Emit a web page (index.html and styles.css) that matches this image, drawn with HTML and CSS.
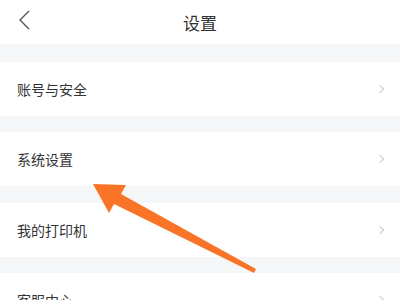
FILE: index.html
```html
<!DOCTYPE html>
<html lang="zh">
<head>
<meta charset="utf-8">
<link rel="stylesheet" href="styles.css">
</head>
<body>
<div class="page">
  <header class="header">
    <svg class="back" width="14" height="22" viewBox="0 0 14 22"><polyline points="12,1 3,10 12,19" fill="none" stroke="#555" stroke-width="1.4"/></svg>
    <h1 class="title">设置</h1>
  </header>
  <div class="gap gap-top"></div>
  <div class="row"><span class="label">账号与安全</span><span class="chev"></span></div>
  <div class="gap"></div>
  <div class="row"><span class="label">系统设置</span><span class="chev"></span></div>
  <div class="gap gap-b"></div>
  <div class="row"><span class="label">我的打印机</span><span class="chev"></span></div>
  <div class="gap"></div>
  <div class="row"><span class="label">客服中心</span><span class="chev"></span></div>
  <svg class="arrow" width="400" height="300" viewBox="0 0 400 300"><polygon points="93,184 126,185 121,194 256,269 254,273 114,204 109,213" fill="#fa7427"/></svg>
</div>
</body>
</html>
```
FILE: styles.css
```css
html, body { margin: 0; padding: 0; background: #fff; }
body { font-family: "Noto Sans CJK SC", "Noto Sans", sans-serif; color: #333; }
.page { position: relative; width: 400px; height: 300px; overflow: hidden; }
.header { height: 44px; display: flex; align-items: center; justify-content: center; position: relative; }
.back { position: absolute; left: 17px; top: 10px; }
.title { margin: 0; font-size: 17px; font-weight: 400; color: #333; line-height: 1; }
.gap { height: 16px; background: #f5f6f8; }
.gap-top { height: 18px; }
.gap-b { height: 17px; }
.row { height: 54px; display: flex; align-items: center; justify-content: space-between; padding: 0 17px 0 17px; }
.label { font-size: 14px; color: #333; }
.chev { width: 5px; height: 5px; border-top: 1.2px solid #c9c9c9; border-right: 1.2px solid #c9c9c9; transform: rotate(45deg); margin-right: 0; }
.arrow { position: absolute; left: 0; top: 0; }
```
